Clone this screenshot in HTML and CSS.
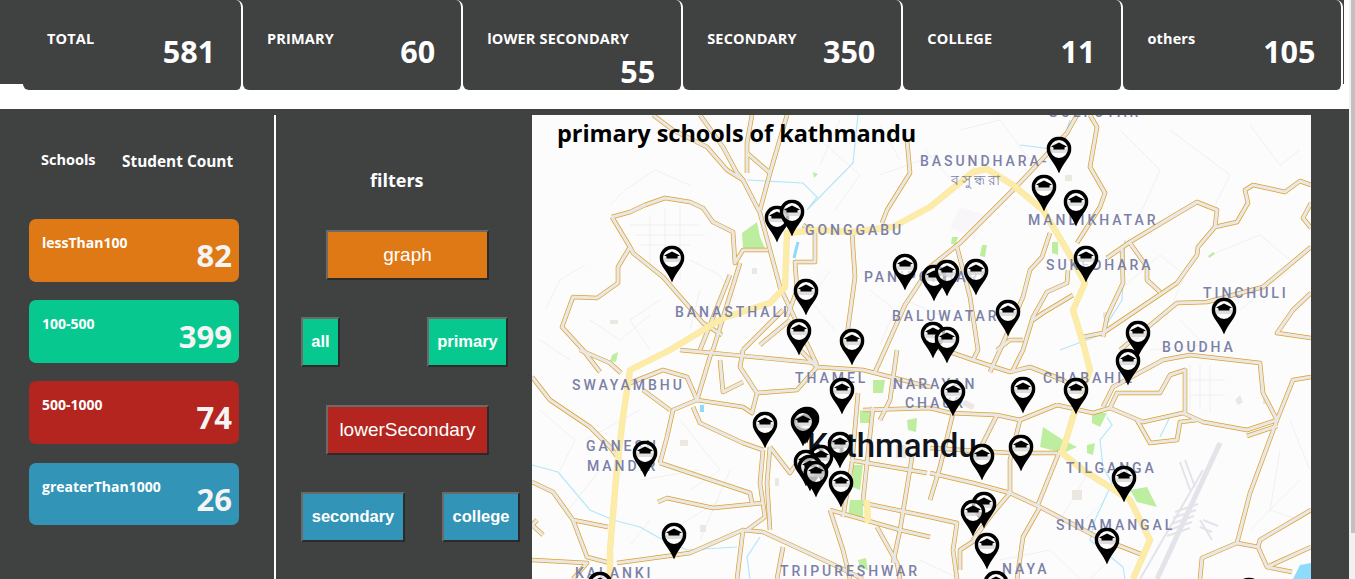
FILE: index.html
```html
<!DOCTYPE html>
<html>
<head>
    <title>Schools of Kathmandu</title>
    <link rel="stylesheet" href="styles.css">
</head>
<body>
    <!-- totals -->
    <div class="stats-bar">
        <div class="stat-card"><span class="stat-label">TOTAL</span><span class="stat-value">581</span></div>
        <div class="stat-card"><span class="stat-label">PRIMARY</span><span class="stat-value">60</span></div>
        <div class="stat-card"><span class="stat-label">lOWER SECONDARY</span><span class="stat-value">55</span></div>
        <div class="stat-card"><span class="stat-label">SECONDARY</span><span class="stat-value">350</span></div>
        <div class="stat-card"><span class="stat-label">COLLEGE</span><span class="stat-value">11</span></div>
        <div class="stat-card"><span class="stat-label">others</span><span class="stat-value">105</span></div>
    </div>

    <div class="main">
        <!-- student count -->
        <div class="count-panel">
            <div class="count-head">
                <span class="count-schools">Schools</span>
                <span class="count-students">Student Count</span>
            </div>
            <div class="tile orange"><span class="tile-label">lessThan100</span><span class="tile-value">82</span></div>
            <div class="tile green"><span class="tile-label">100-500</span><span class="tile-value">399</span></div>
            <div class="tile red"><span class="tile-label">500-1000</span><span class="tile-value">74</span></div>
            <div class="tile blue"><span class="tile-label">greaterThan1000</span><span class="tile-value">26</span></div>
        </div>

        <!-- filters -->
        <div class="filter-panel">
            <h3 class="filter-title">filters</h3>
            <div class="filter-row row-center"><button class="btn btn-large orange">graph</button></div>
            <div class="filter-row row-wide">
                <button class="btn btn-small green btn-all">all</button>
                <button class="btn btn-small green btn-primary">primary</button>
            </div>
            <div class="filter-row row-center"><button class="btn btn-large red">lowerSecondary</button></div>
            <div class="filter-row row-narrow">
                <button class="btn btn-small blue btn-secondary">secondary</button>
                <button class="btn btn-small blue btn-college">college</button>
            </div>
        </div>

        <!-- map -->
        <div class="map">
            <h2 class="map-title">primary schools of kathmandu</h2>
            <svg class="map-svg" viewBox="532 115 779 464" width="779" height="464">
                <defs>
                    <symbol id="pin" viewBox="0 0 25 37" width="25" height="37">
                        <circle cx="12.5" cy="12.5" r="9.5" fill="#fff" fill-opacity="0.7"/>
                        <rect x="4" y="12" width="17" height="4.5" fill="#d2d2d2" fill-opacity="0.7"/>
                        <path d="M12.5 0A12.5 12.5 0 0 1 25 12.5C25 20 16 27 12.5 37C9 27 0 20 0 12.5A12.5 12.5 0 0 1 12.5 0ZM12.5 3.6A8.9 8.9 0 0 0 12.5 21.4A8.9 8.9 0 0 0 12.5 3.6Z" fill="#000" fill-rule="evenodd"/>
                        <path d="M4.5 10L12.5 6L20.5 10L18 11V13H7V11Z" fill="#000"/>
                    </symbol>

                    <g id="streets">
                        <path d="M612 217L630 212L645 205L665 198L690 202L703 208L713 222L733 232L735 263L743 250H768"/>
                        <path d="M612 217L630 247L633 253L663 277L683 300L703 323L722 335"/>
                        <path d="M630 247L618 267L618 283L597 298L573 297L562 327L583 350L600 372"/>
                        <path d="M653 115L673 130L707 147L727 170L743 180L760 213L780 287L797 323L810 350L817 365"/>
                        <path d="M700 115L723 147L737 173L743 180"/>
                        <path d="M787 115L770 173L760 210"/>
                        <path d="M752 115L747 143V173"/>
                        <path d="M747 153L770 173"/>
                        <path d="M740 263L713 350"/>
                        <path d="M730 275L700 350"/>
                        <path d="M907 140L910 173L887 210L882 223"/>
                        <path d="M852 233L855 277L845 350"/>
                        <path d="M803 225L815 233V262H795L797 290L787 317"/>
                        <path d="M743 350L770 323L783 310"/>
                        <path d="M760 345L790 320"/>
                        <path d="M1077 115L1067 133L1013 190L960 243L930 267L905 305L885 350L875 372"/>
                        <path d="M1090 115L1097 127L1090 167L1105 193L1100 207L1077 243"/>
                        <path d="M1311 185L1300 181L1285 192L1253 185L1245 190L1248 203L1237 222L1215 227L1198 247L1197 255L1177 283L1103 333L1083 337"/>
                        <path d="M1215 227L1217 210L1197 202L1170 218L1130 242L1107 258"/>
                        <path d="M1122 247L1123 283L1107 317L1103 337"/>
                        <path d="M1130 243L1147 267V280L1160 292"/>
                        <path d="M1120 350L1177 303L1207 302L1263 287L1311 247"/>
                        <path d="M1311 293L1293 310L1277 333L1311 338"/>
                        <path d="M1311 203L1303 218L1311 228"/>
                        <path d="M1050 233L1042 257L1030 270L1023 297L1000 350L990 372"/>
                        <path d="M1068 270L1067 283L1047 292L1033 317L1023 350L1012 372"/>
                        <path d="M1073 295L1043 313L1033 320"/>
                        <path d="M957 247L970 297L978 350L973 360"/>
                        <path d="M997 350L1010 340H1023"/>
                        <path d="M930 345L973 360L1010 372L1030 367L1063 380L1070 385"/>
                        <path d="M1057 405L1020 420L997 415L950 413L930 408L863 410"/>
                        <path d="M1057 405L1093 413L1110 408L1143 422L1183 413L1203 422L1247 430L1277 420L1293 380L1311 377"/>
                        <path d="M1110 408L1117 393H1160L1170 375L1185 370V413"/>
                        <path d="M1103 407L1113 387L1163 360L1190 355L1260 363L1263 393L1277 420"/>
                        <path d="M1137 420L1150 443L1177 440L1180 422L1197 420"/>
                        <path d="M1247 436L1277 426"/>
                        <path d="M1277 420L1250 493L1237 543L1258 547L1267 567L1292 572"/>
                        <path d="M1200 579L1202 558L1237 543"/>
                        <path d="M1258 547L1260 540L1311 510"/>
                        <path d="M1267 567L1311 547"/>
                        <path d="M930 473L973 483L1010 493L1040 507L1097 537L1143 555"/>
                        <path d="M1010 493V460L1020 420"/>
                        <path d="M930 448L1010 453H1057"/>
                        <path d="M1040 507L1023 537L1017 579"/>
                        <path d="M1060 450L1037 507"/>
                        <path d="M930 517L957 523L953 550L957 579"/>
                        <path d="M980 537L960 550V570"/>
                        <path d="M1010 493L993 513L973 540"/>
                        <path d="M953 413L940 467L930 500"/>
                        <path d="M997 415L973 463"/>
                        <path d="M532 377L550 400L590 427L610 447L620 460"/>
                        <path d="M532 482L553 492L573 520L587 557L610 563"/>
                        <path d="M573 520L608 527"/>
                        <path d="M532 560L587 563L573 579"/>
                        <path d="M537 520L532 525L543 535"/>
                        <path d="M580 350L610 363L621 373"/>
                        <path d="M630 383L663 370L687 377L697 400L673 410L667 437L660 463"/>
                        <path d="M643 390L670 410"/>
                        <path d="M660 463L750 493L752 503"/>
                        <path d="M658 502L667 498L713 508L763 503"/>
                        <path d="M617 563L690 553L743 530L763 532L830 563L863 579"/>
                        <path d="M743 530L737 579"/>
                        <path d="M763 450L760 483L765 517L747 530"/>
                        <path d="M770 447L767 483L770 530"/>
                        <path d="M697 400L743 407L752 413L757 393L740 367L743 350"/>
                        <path d="M693 407L700 423L743 443L763 450"/>
                        <path d="M712 350L697 400"/>
                        <path d="M720 360L723 392L743 382"/>
                        <path d="M757 393L797 390L817 367L863 370L930 387"/>
                        <path d="M680 350L817 363"/>
                        <path d="M817 367L800 350"/>
                        <path d="M770 447L790 473L797 463"/>
                        <path d="M830 510L900 530L930 537"/>
                        <path d="M830 510L843 550L850 579"/>
                        <path d="M877 527L897 563L900 579"/>
                        <path d="M912 457L900 530L893 563"/>
                        <path d="M850 460L927 473"/>
                        <path d="M863 503L930 517"/>
                        <path d="M858 393L852 463L843 517"/>
                        <path d="M873 407L867 463L863 500"/>
                        <path d="M783 547L777 579"/>
                        <path d="M897 350L890 400L880 420"/>
                    </g>

                    <g id="highway">
                        <path d="M610 579L610 550L617 467L623 417L630 370L670 350L723 318L770 303L785 287L787 233L817 230L850 232L893 227L930 207L973 172L987 169L1013 185L1043 210L1067 250L1085 283L1073 310L1083 343L1090 370L1073 417L1062 453L1083 470L1130 500L1150 540L1133 579"/>
                        <path d="M867 500L868 523"/>
                    </g>
                </defs>

                <rect x="532" y="115" width="779" height="464" fill="#fcfcfd"/>

                <!-- small lanes -->
                <g class="lanes">
                    <path d="M610 205L625 190L655 170L690 185"/>
                    <path d="M630 225H700M635 235H705M640 245H690M650 215V265M665 208V270M680 205V280"/>
                    <path d="M545 310L560 280L585 265M540 340L570 360M590 320L620 340L650 315"/>
                    <path d="M690 260L720 275L735 300M700 290L690 330M660 300L630 320L650 350"/>
                    <path d="M820 140L860 175L835 210M880 125L900 160M840 120L820 165"/>
                    <path d="M830 270L810 300L835 330M870 290L895 310L880 345M905 300L940 315"/>
                    <path d="M1120 130L1160 170L1140 215M1170 130L1230 175L1215 205M1250 125L1280 165L1300 150"/>
                    <path d="M1120 290L1160 255L1185 275L1165 320M1210 255L1260 235L1290 260M1240 310L1290 270"/>
                    <path d="M1190 365V410M1200 365V410M1210 365V412M1190 380H1225M1190 395H1225"/>
                    <path d="M1280 450L1270 510L1300 520M1290 420L1310 470M1250 530L1300 480"/>
                    <path d="M540 410L575 440L560 470M600 470L560 520M650 520L630 545M585 440L640 410"/>
                    <path d="M680 420L720 470L690 490M730 470L700 540M640 480L700 470M680 525L720 500"/>
                    <path d="M1090 470L1060 520M1105 500L1075 530M1180 320L1205 345L1150 350"/>
                    <path d="M960 130L1000 120L1030 160M925 150L960 190M880 175L935 155"/>
                    <path d="M1000 560L1050 550L1080 579M1110 560L1090 579M920 560L960 579"/>
                </g>

                <!-- parks -->
                <g fill="#bdeea0">
                    <path d="M742 233L757 222L760 237L765 248H743Z"/>
                    <path d="M1043 427L1063 440L1077 447L1063 453L1040 447Z"/>
                    <path d="M1130 490L1147 487L1157 507L1137 502Z"/>
                    <path d="M1092 413H1107L1100 427L1092 423Z"/>
                    <path d="M1087 445L1095 443L1093 455L1087 453Z"/>
                    <path d="M873 380H885L883 393H873Z"/>
                    <path d="M860 410L872 412L870 423H860Z"/>
                    <path d="M850 500H863V520L848 517Z"/>
                    <path d="M853 465H863L860 490L852 487Z"/>
                    <path d="M982 245L987 245L985 257L980 256Z"/>
                    <path d="M952 237L958 237L956 245L951 244Z"/>
                    <path d="M1052 242H1058V255L1052 253Z"/>
                    <path d="M813 172L818 174L814 178Z"/>
                    <path d="M1208 256L1213 252L1215 254L1209 258Z"/>
                    <path d="M907 420L917 418L916 432L908 430Z"/>
                    <path d="M612 355L618 352L616 362L610 361Z"/>
                    <path d="M858 560L866 558L868 570L860 568Z"/>
                </g>

                <!-- buildings -->
                <g fill="#ece7e1">
                    <path d="M752 268H757V274H752Z"/>
                    <path d="M610 320H618V324H610Z"/>
                    <path d="M680 440H688V446H680Z"/>
                    <path d="M700 525H706V532H700Z"/>
                    <path d="M775 478H779V486H775Z"/>
                    <path d="M1072 490H1082V500H1072Z"/>
                    <path d="M896 445H906V458H896Z"/>
                    <path d="M965 400L975 405L972 410L962 405Z"/>
                    <path d="M1235 400L1240 395L1243 402L1238 405Z"/>
                    <path d="M1263 398H1268V404H1263Z"/>
                    <path d="M1065 175H1072V181H1065Z"/>
                    <path d="M1103 312H1108V318H1103Z"/>
                    <path d="M960 207L985 215L975 238L950 228Z" fill="#f8f6f9"/>
                </g>

                <!-- rivers -->
                <g class="water">
                    <path d="M747 180L803 183L817 197L807 210M858 115L853 163L807 210"/>
                    <path d="M1107 417L1112 425L1100 440L1103 467L1112 483L1095 520L1090 540L1123 567L1125 579"/>
                    <path d="M532 465L558 472L590 510L613 520L640 527L663 540L687 550L737 547"/>
                    <path d="M760 537L747 557L750 579"/>
                    <path d="M1170 417L1160 437"/>
                    <path d="M1125 240L1122 300L1100 335L1060 350"/>
                    <path d="M1020 145L1060 150L1070 120"/>
                </g>
                <path d="M798 242L794 258" stroke="#8dd8fb" stroke-width="3" fill="none"/>
                <path d="M1293 579L1300 565L1311 563V579Z" fill="#8ddcfb"/>
                <path d="M700 405H704V412H700Z" fill="#8ddcfb"/>

                <!-- airport -->
                <g class="airport">
                    <path class="runway" d="M1220 443L1157 579"/>
                    <path d="M1203 470L1140 579"/>
                    <path d="M1180 462L1190 490M1185 460L1195 487"/>
                    <path d="M1175 512L1198 504M1173 518L1196 510M1171 524L1194 516M1169 530L1192 522M1167 536L1190 528"/>
                    <path d="M1200 520L1212 540M1203 520L1218 526M1200 527L1212 532"/>
                </g>

                <!-- roads, casing under fill -->
                <use href="#streets" class="street-edge"/>
                <use href="#streets" class="street-fill"/>
                <use href="#highway" class="highway-edge"/>
                <use href="#highway" class="highway-fill"/>

                <!-- place names -->
                <g class="place">
                    <text x="1048" y="117">GOLFUTAR</text>
                    <text x="920" y="166">BASUNDHARA-</text>
                    <text class="place-local" x="951" y="185">বসুন্ধরা</text>
                    <text x="1028" y="225">MANDIKHATAR</text>
                    <text x="805" y="235">GONGGABU</text>
                    <text x="864" y="282">PANIPOKHARI</text>
                    <text x="1046" y="270">SUKEDHARA</text>
                    <text x="1203" y="298">TINCHULI</text>
                    <text x="892" y="321">BALUWATAR</text>
                    <text x="675" y="317">BANASTHALI</text>
                    <text x="1162" y="352">BOUDHA</text>
                    <text x="572" y="390">SWAYAMBHU</text>
                    <text x="795" y="383">THAMEL</text>
                    <text x="893" y="389">NARAYAN</text>
                    <text x="905" y="408">CHAUR</text>
                    <text x="1043" y="383">CHABAHIL</text>
                    <text x="586" y="451">GANESH</text>
                    <text x="587" y="471">MANDIR</text>
                    <text x="1066" y="473">TILGANGA</text>
                    <text x="1056" y="530">SINAMANGAL</text>
                    <text x="575" y="578">KALANKI</text>
                    <text x="780" y="576">TRIPURESHWAR</text>
                    <text x="1002" y="574">NAYA</text>
                </g>
                <text class="city" x="807" y="457">Kathmandu</text>

                <!-- schools -->
                <g>
                    <use href="#pin" x="659.5" y="245.5"/>
                    <use href="#pin" x="764.5" y="205.5"/>
                    <use href="#pin" x="779.5" y="199.5"/>
                    <use href="#pin" x="793.5" y="278.5"/>
                    <use href="#pin" x="786.5" y="318.5"/>
                    <use href="#pin" x="839.5" y="328.5"/>
                    <use href="#pin" x="892.5" y="253.5"/>
                    <use href="#pin" x="1046.5" y="136.5"/>
                    <use href="#pin" x="1031.5" y="174.5"/>
                    <use href="#pin" x="1063.5" y="189.5"/>
                    <use href="#pin" x="1073.5" y="245.5"/>
                    <use href="#pin" x="963.5" y="258.5"/>
                    <use href="#pin" x="921.5" y="264.5"/>
                    <use href="#pin" x="934.5" y="259.5"/>
                    <use href="#pin" x="995.5" y="299.5"/>
                    <use href="#pin" x="1211.5" y="297.5"/>
                    <use href="#pin" x="1125.5" y="320.5"/>
                    <use href="#pin" x="920.5" y="321.5"/>
                    <use href="#pin" x="934.5" y="326.5"/>
                    <use href="#pin" x="1115.5" y="348.5"/>
                    <use href="#pin" x="1063.5" y="377.5"/>
                    <use href="#pin" x="1010.5" y="376.5"/>
                    <use href="#pin" x="940.5" y="379.5"/>
                    <use href="#pin" x="829.5" y="377.5"/>
                    <use href="#pin" x="752.5" y="411.5"/>
                    <use href="#pin" x="794.5" y="406.5"/>
                    <use href="#pin" x="792.5" y="407.5"/>
                    <use href="#pin" x="790.5" y="409.5"/>
                    <use href="#pin" x="827.5" y="431.5"/>
                    <use href="#pin" x="632.5" y="440.5"/>
                    <use href="#pin" x="808.5" y="444.5"/>
                    <use href="#pin" x="793.5" y="449.5"/>
                    <use href="#pin" x="797.5" y="454.5"/>
                    <use href="#pin" x="803.5" y="460.5"/>
                    <use href="#pin" x="828.5" y="470.5"/>
                    <use href="#pin" x="1008.5" y="434.5"/>
                    <use href="#pin" x="969.5" y="443.5"/>
                    <use href="#pin" x="1111.5" y="465.5"/>
                    <use href="#pin" x="971.5" y="491.5"/>
                    <use href="#pin" x="960.5" y="499.5"/>
                    <use href="#pin" x="974.5" y="532.5"/>
                    <use href="#pin" x="1094.5" y="527.5"/>
                    <use href="#pin" x="661.5" y="522.5"/>
                    <use href="#pin" x="983.5" y="570.5"/>
                    <use href="#pin" x="587.5" y="571.5"/>
                    <use href="#pin" x="1236.5" y="577.5"/>
                </g>
            </svg>
        </div>
    </div>

    <div class="scrollbar"><div class="scrollbar-thumb"></div></div>
</body>
</html>
```

FILE: styles.css
```css
/* Reset */
html, body {
    margin: 0;
    padding: 0;
    overflow: hidden;
}

/* Global styles */
body {
    background-color: #fff;
    color: #fff;
    font-family: "Open Sans", "Noto Sans", sans-serif;
    height: 579px;
}

/* Colours shared by tiles and buttons */
.orange { background-color: #de7916; }
.green { background-color: #07c990; }
.red { background-color: #b3251e; }
.blue { background-color: #3294b6; }

/* Top totals */
.stats-bar {
    display: flex;
    width: 1343.5px;
    height: 90px;
    padding-left: 23px;
    box-sizing: border-box;
    background: linear-gradient(#404141 84px, transparent 84px);
}

.stat-card {
    flex: 1;
    display: flex;
    flex-wrap: wrap;
    align-content: flex-start;
    justify-content: space-between;
    padding: 29px 26px 0 24px;
    background-color: #404141;
    border-right: 2px solid #fff;
    border-radius: 0 7px 6px 6px;
}

.stat-label {
    font-size: 14.5px;
    font-weight: 700;
    line-height: 20px;
    letter-spacing: 0.15px;
}

.stat-value {
    margin-left: auto;
    margin-top: 2px;
    font-size: 30.5px;
    font-weight: 700;
    line-height: 40px;
}

/* Main area */
.main {
    display: flex;
    width: 1349px;
    height: 470px;
    margin-top: 19px;
    padding: 6px 38px 0 0;
    box-sizing: border-box;
    background-color: #404141;
}

/* Student count column */
.count-panel {
    width: 274px;
    flex-shrink: 0;
    padding-left: 29px;
    box-sizing: border-box;
}

.count-head {
    display: flex;
    align-items: flex-start;
    height: 104px;
    padding: 35px 0 0 12px;
    box-sizing: border-box;
    font-weight: 700;
}

.count-schools {
    width: 81px;
    font-size: 14.5px;
    line-height: 20px;
}

.count-students {
    margin-top: 2px;
    font-size: 15.4px;
    line-height: 20px;
    white-space: nowrap;
}

.tile {
    display: flex;
    justify-content: space-between;
    width: 210px;
    height: 62.6px;
    margin-bottom: 18.6px;
    padding: 14px 7px 0 13px;
    box-sizing: border-box;
    border-radius: 7px;
}

.tile-label {
    font-size: 14px;
    font-weight: 700;
    line-height: 20px;
}

.tile-value {
    margin-top: 2px;
    font-size: 31px;
    font-weight: 700;
    line-height: 40px;
    color: #f4f4f4;
}

/* Filters column */
.filter-panel {
    width: 258px;
    flex-shrink: 0;
    border-left: 2px solid #fff;
    padding-left: 25px;
    box-sizing: border-box;
}

.filter-title {
    margin: 0;
    height: 115px;
    padding: 47px 0 0 69px;
    box-sizing: border-box;
    font-size: 18px;
    font-weight: 700;
    line-height: 36px;
}

.filter-row {
    display: flex;
}

.row-center {
    padding-left: 25px;
    margin-bottom: 37px;
}

.row-wide {
    gap: 87px;
    margin-bottom: 38px;
}

.row-narrow {
    gap: 37px;
}

.btn {
    padding: 0;
    color: #fff;
    font-family: "Liberation Sans", Arial, sans-serif;
    border: 2px solid;
    border-color: #6a6a6a #2b2b2b #2b2b2b #6a6a6a;
}

.btn-large {
    width: 163px;
    height: 50px;
    font-size: 19px;
}

.btn-small {
    height: 50px;
    padding-bottom: 2px;
    font-size: 16.5px;
    font-weight: 700;
}

.btn-all { width: 39px; }
.btn-primary { width: 81px; }
.btn-secondary { width: 104px; }
.btn-college { width: 78px; }

/* Map */
.map {
    position: relative;
    width: 779px;
    overflow: hidden;
}

.map-svg {
    display: block;
}

.map-title {
    position: absolute;
    top: 2px;
    left: 25px;
    z-index: 1;
    margin: 0;
    color: #000;
    font-size: 23.5px;
    font-weight: 700;
    line-height: 32px;
    letter-spacing: -0.05px;
    white-space: nowrap;
}

.lanes path {
    fill: none;
    stroke: #eeeeef;
    stroke-width: 0.8;
}

.water path {
    fill: none;
    stroke: #b4e6fb;
    stroke-width: 1.2;
}

.airport path {
    fill: none;
    stroke: #e3e3ea;
    stroke-width: 2;
}

.airport .runway {
    stroke-width: 5;
}

.street-edge,
.street-fill,
.highway-edge,
.highway-fill {
    fill: none;
    stroke-linejoin: round;
}

.street-edge {
    stroke: #e0a020;
    stroke-width: 4.6;
}

.street-fill {
    stroke: #e8e8e9;
    stroke-width: 3.2;
}

.highway-edge {
    stroke: #f8e8ae;
    stroke-width: 6.4;
}

.highway-fill {
    stroke: #fdeca6;
    stroke-width: 5;
}

.place text {
    fill: #7b81a6;
    font-family: Roboto, sans-serif;
    font-size: 14px;
    font-weight: 500;
    letter-spacing: 2.95px;
}

.place .place-local {
    font-size: 14px;
    letter-spacing: 3px;
}

.city {
    fill: #10141c;
    font-family: Roboto, sans-serif;
    font-size: 33px;
    font-weight: 500;
}

/* Page scrollbar */
.scrollbar {
    position: fixed;
    top: 0;
    right: 0;
    bottom: 0;
    width: 6px;
    background-color: #f1f1f1;
}

.scrollbar-thumb {
    width: 4px;
    height: 533px;
    margin-left: 2px;
    background-color: #c1c1c1;
}
```
